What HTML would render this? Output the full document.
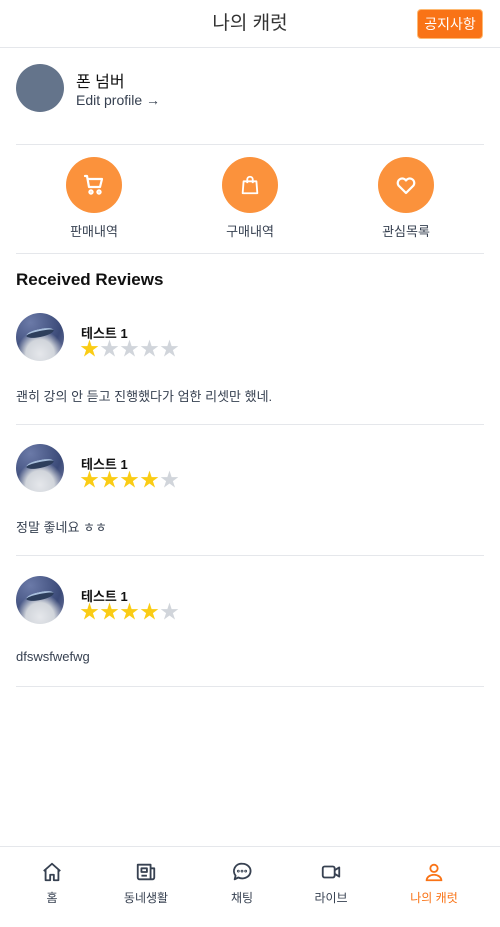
<!DOCTYPE html>
<html><head><meta charset="utf-8"><style>
*{box-sizing:border-box;margin:0;padding:0}
body{width:500px;height:927px;background:#fff;font-family:"Liberation Sans","Noto Sans CJK KR",sans-serif;color:#1f2937;position:relative;overflow:hidden}
.hdr{height:48px;border-bottom:1px solid #e5e7eb;position:relative;text-align:center;line-height:47px;font-size:19px;color:#333}
.notice{position:absolute;right:17px;top:9px;height:30px;width:66px;background:#f97316;border:1px solid #fdba74;border-radius:4px;color:#fff;font-size:14px;line-height:28px;text-align:center}
.prof{position:absolute;left:16px;top:64px}
.pav{position:absolute;left:0;top:0;width:48px;height:48px;border-radius:50%;background:#64748b}
.pname{position:absolute;left:60px;top:4px;font-size:16px;white-space:nowrap;color:#111}
.pedit{position:absolute;left:60px;top:28px;font-size:14px;white-space:nowrap;color:#374151}
.hr{position:absolute;left:16px;right:16px;height:1px;background:#e5e7eb}
.act{position:absolute;top:157px;width:100px;text-align:center}
.circ{width:56px;height:56px;border-radius:50%;background:#fb923c;margin:0 auto;display:flex;align-items:center;justify-content:center}
.act span{display:block;margin-top:8px;font-size:13px;color:#374151}
h2{position:absolute;left:16px;top:270px;font-size:17px;font-weight:bold;color:#111}
.rv{position:absolute;left:16px;width:468px}
.av{position:absolute;left:0;top:0;width:48px;height:48px;border-radius:50%;overflow:hidden;background:radial-gradient(circle at 50% 85%,#e5e7eb 0,#d1d5db 30%,transparent 50%),radial-gradient(circle at 30% 20%,#6b7aa8,#3b4a78 60%,#7c83a8)}
.av i{position:absolute;left:10px;top:16px;width:28px;height:8px;background:#2d3e5c;border-radius:50%;transform:rotate(-12deg);border-top:2px solid #a9c0dd}
.nm{position:absolute;left:65px;top:10px;font-size:13px;font-weight:bold;color:#111}
.st{position:absolute;left:64px;top:27px;font-size:19px;letter-spacing:1px;line-height:20px;color:#d1d5db}
.st b{color:#facc15;font-weight:normal}
.tx{position:absolute;left:0;top:73px;font-size:13px;color:#374151;white-space:nowrap}
.nav{position:absolute;left:0;top:846px;width:500px;height:81px;border-top:1px solid #e5e7eb}
.ni{position:absolute;top:14px;width:80px;text-align:center;font-size:12px;color:#374151}
.ni svg{display:block;margin:0 auto 6px}
</style></head><body>
<div class="hdr">나의 캐럿<div class="notice">공지사항</div></div>
<div class="prof"><div class="pav"></div><div class="pname">폰 넘버</div><div class="pedit">Edit profile →</div></div>
<div class="hr" style="top:144px"></div>
<div class="act" style="left:44px"><div class="circ"><svg width="24" height="24" viewBox="0 0 24 24" fill="none" stroke="#fff" stroke-width="2.2" stroke-linecap="round" stroke-linejoin="round"><path d="M3 3h2l2 11h11l2-8H6"/><circle cx="9" cy="19" r="1.6"/><circle cx="17" cy="19" r="1.6"/></svg></div><span>판매내역</span></div>
<div class="act" style="left:200px"><div class="circ"><svg width="22" height="22" viewBox="0 0 24 24" fill="none" stroke="#fff" stroke-width="2" stroke-linejoin="round"><path d="M5 8h14l1 13H4z"/><path d="M9 10V6a3 3 0 0 1 6 0v4"/></svg></div><span>구매내역</span></div>
<div class="act" style="left:356px"><div class="circ"><svg width="24" height="24" viewBox="0 0 24 24" fill="none" stroke="#fff" stroke-width="2.2" stroke-linejoin="round"><path d="M12 20l-7.5-7.5a4.5 4.5 0 0 1 7.5-5 4.5 4.5 0 0 1 7.5 5z"/></svg></div><span>관심목록</span></div>
<div class="hr" style="top:253px"></div>
<h2>Received Reviews</h2>
<div class="rv" style="top:313px"><div class="av"><i></i></div><div class="nm">테스트 1</div><div class="st"><b>★</b>★★★★</div><div class="tx">괜히 강의 안 듣고 진행했다가 엄한 리셋만 했네.</div></div>
<div class="hr" style="top:424px"></div>
<div class="rv" style="top:444px"><div class="av"><i></i></div><div class="nm">테스트 1</div><div class="st"><b>★★★★</b>★</div><div class="tx">정말 좋네요 ㅎㅎ</div></div>
<div class="hr" style="top:555px"></div>
<div class="rv" style="top:576px"><div class="av"><i></i></div><div class="nm">테스트 1</div><div class="st"><b>★★★★</b>★</div><div class="tx">dfswsfwefwg</div></div>
<div class="hr" style="top:686px"></div>
<div class="nav">
<div class="ni" style="left:12px"><svg width="22" height="22" viewBox="0 0 24 24" fill="none" stroke="#374151" stroke-width="2" stroke-linejoin="round"><path d="M3 11l9-8 9 8M5 9v12h5v-6h4v6h5V9"/></svg>홈</div>
<div class="ni" style="left:106px"><svg width="22" height="22" viewBox="0 0 24 24" fill="none" stroke="#374151" stroke-width="2" stroke-linejoin="round"><path d="M3 4h14v16H5a2 2 0 0 1-2-2zM17 8h4v10a2 2 0 0 1-2 2h-2M7 8h6v4H7zM7 16h6"/></svg>동네생활</div>
<div class="ni" style="left:202px"><svg width="22" height="22" viewBox="0 0 24 24" fill="none" stroke="#374151" stroke-width="2" stroke-linejoin="round"><path d="M12 3a9 8 0 1 1-4 15l-4 2 1-4A8 8 0 0 1 12 3z"/><circle cx="8" cy="11" r=".5"/><circle cx="12" cy="11" r=".5"/><circle cx="16" cy="11" r=".5"/></svg>채팅</div>
<div class="ni" style="left:291px"><svg width="22" height="22" viewBox="0 0 24 24" fill="none" stroke="#374151" stroke-width="2" stroke-linejoin="round"><rect x="3" y="6" width="13" height="12" rx="2"/><path d="M16 10l5-3v10l-5-3"/></svg>라이브</div>
<div class="ni" style="left:394px;color:#f97316"><svg width="22" height="22" viewBox="0 0 24 24" fill="none" stroke="#f97316" stroke-width="2"><circle cx="12" cy="8" r="4"/><path d="M4 21a8 6 0 0 1 16 0z"/></svg>나의 캐럿</div>
</div>
</body></html>
